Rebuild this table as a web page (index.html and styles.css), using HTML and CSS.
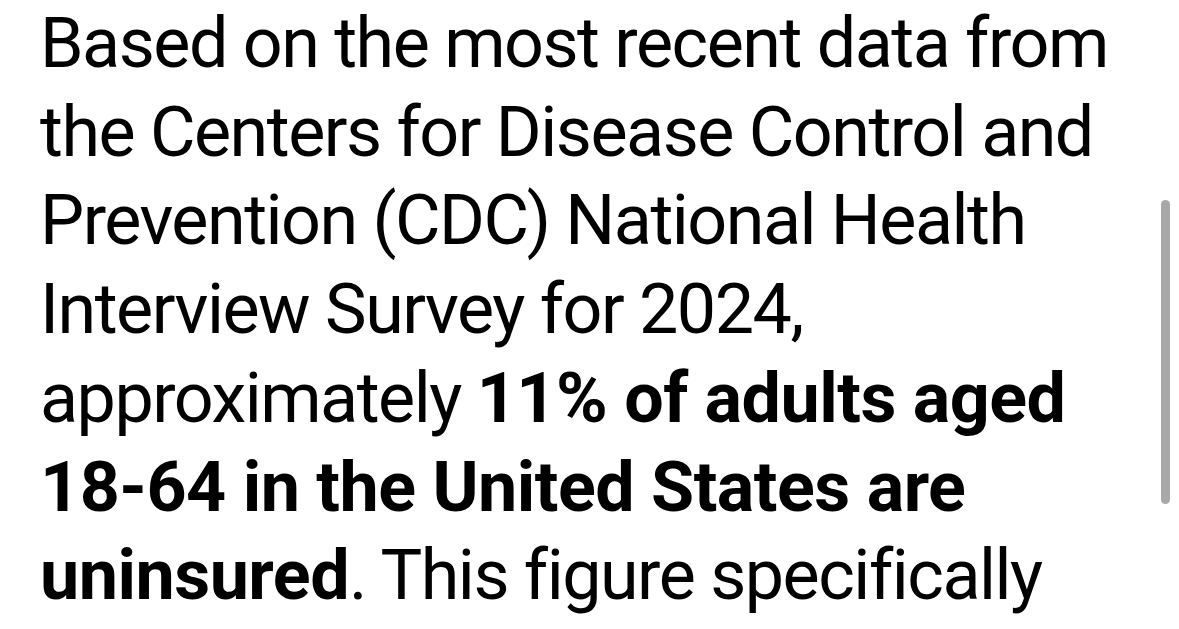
FILE: index.html
```html
<!DOCTYPE html>
<html>
<head>
<meta charset="utf-8">
<link rel="stylesheet" href="styles.css">
</head>
<body>
<div class="screen">
  <p class="answer">Based on the most recent data from<br>the Centers for Disease Control and<br>Prevention (CDC) National Health<br>Interview Survey for 2024,<br>approximately <strong>11% of adults aged<br>18-64 in the United States are<br>uninsured</strong>. This figure specifically</p>
  <div class="scrollbar"></div>
</div>
</body>
</html>
```
FILE: styles.css
```css
html, body {
  margin: 0;
  padding: 0;
  background: #ffffff;
}
.screen {
  position: relative;
  width: 1179px;
  height: 629px;
  overflow: hidden;
  background: #ffffff;
}
.answer {
  margin: -1px 0 0 40px;
  white-space: nowrap;
  font-family: "Roboto", "Liberation Sans", sans-serif;
  font-size: 70px;
  line-height: 88.7px;
  color: #000000;
  letter-spacing: -1.5px;
}
.answer strong {
  font-weight: 700;
  letter-spacing: -0.5px;
}
.scrollbar {
  position: absolute;
  left: 1161px;
  top: 200px;
  width: 9px;
  height: 304px;
  border-radius: 5px;
  background: #a8a8a8;
}
```
